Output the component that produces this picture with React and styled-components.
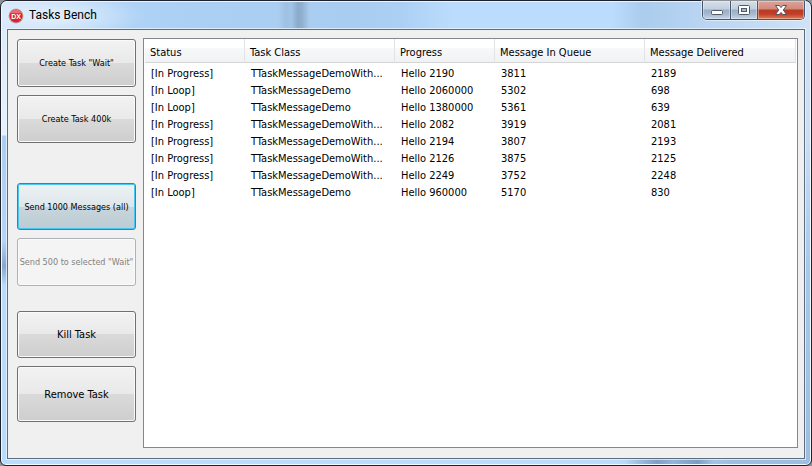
import React from "react";
import styled, { createGlobalStyle, css } from "styled-components";

const GlobalStyle = createGlobalStyle`
  * { box-sizing: border-box; }
  body {
    margin: 0;
    background: #8d9299;
    font-family: Tahoma, "DejaVu Sans Condensed", "Noto Sans", sans-serif;
    font-size: 11px;
    color: #000;
  }
`;

const Window = styled.main`
  min-height: 100vh;
  display: flex;
  flex-direction: column;
  padding: 0 6px 6px 6px;
  border: 1px solid #20222b;
  border-radius: 7px 7px 6px 6px;
  box-shadow: inset 0 0 0 1px #f2f8ff;
  background:
    linear-gradient(90deg, transparent 77%, #7f9fc5 81%, #94b4d8 83%, #7a9dc5 86%, transparent 88%) bottom / 100% 6px no-repeat,
    linear-gradient(180deg, #d9e9fa 0, #e6f1fc 134px, #abcdf0 135px, #b4d5f8 240px, #86a6cb 265px, #b9dcfd 285px) left / 7px 100% no-repeat,
    linear-gradient(180deg, #d3e4f7 0, #c9def5 140px, #a9c9ec 260px, #9dbde0 100%) right / 7px 100% no-repeat,
    linear-gradient(90deg, #bbdcfd 0, #bbdcfd 76%, #9fbfe2 90%);
`;

const TitleBar = styled.header`
  display: flex;
  align-items: flex-start;
  height: 28px;
  margin: 0 -5px;
  padding: 0 5px 0 6px;
  border-top: 1px solid #eaf4ff;
  border-radius: 6px 6px 0 0;
  background:
    radial-gradient(ellipse 90px 20px at 54px 14px, rgba(255,255,255,.5), transparent),
    linear-gradient(90deg, transparent 276px, rgba(70,90,115,.12) 284px, rgba(70,90,115,.08) 289px, rgba(70,90,115,.3) 296px, rgba(70,90,115,.26) 300px, transparent 308px),
    linear-gradient(90deg, #d5e6f9 0, #c5dff9 60px, #afd3f7 130px, #acd0f4 190px, #a9cdf0 350px, #acd0f4 400px, #bbdcfc 450px, #bbdcfc 610px, #abcced 640px, #b4d2f1 680px, #d0e2f6 100%);
`;

const AppIcon = styled.svg`
  width: 16px;
  height: 16px;
  margin-top: 6px;
`;

const Title = styled.h1`
  flex: 1;
  margin: 5px 0 0 5px;
  font: 12px/16px "Segoe UI", Roboto, sans-serif;
`;

const Controls = styled.div`
  display: flex;
  height: 19px;
  margin-top: -1px;
  border: 1px solid #4a5667;
  border-top: 0;
  border-radius: 0 0 5px 5px;
  overflow: hidden;
  box-shadow: 0 0 0 1px rgba(255,255,255,.5);
`;

const ControlButton = styled.button`
  display: grid;
  place-items: center;
  width: ${(p) => (p.$close ? 47 : 27)}px;
  padding: 0;
  border: 0;
  border-left: ${(p) => (p.$first ? 0 : 1)}px solid #4a5667;
  box-shadow: inset 0 0 0 1px rgba(255,255,255,.35);
  background: ${(p) =>
    p.$close
      ? "linear-gradient(#dfa397 0, #d08a7c 8px, #b93a25 9px, #c23d26 13px, #dc7d55 100%)"
      : "linear-gradient(#d4dfeb 0, #c0cedf 8px, #9aaec6 9px, #a5b8cf 13px, #c3d6ea 100%)"};
  svg { display: block; }
`;

const Client = styled.div`
  flex: 1;
  display: flex;
  align-items: stretch;
  gap: 7px;
  padding: 8px 6px 10px 9px;
  border: 1px solid #5e6d7d;
  box-shadow: 0 0 0 1px rgba(235,246,255,.75);
  background: #f0f0f0;
`;

const Sidebar = styled.nav`
  flex: none;
  width: 119px;
  padding-top: 1px;
`;

const ButtonGroup = styled.div`
  display: flex;
  flex-direction: column;
  gap: 8px;
  margin-bottom: ${(p) => p.$after}px;
`;

const active = css`
  border-color: #3c7fb1;
  box-shadow: inset 0 0 0 1px #48c8f0;
  background: linear-gradient(#eef2f4 0, #dde6ea 50%, #c8d5dc 50%, #bccbd3 100%);
`;

const TaskButton = styled.button`
  height: ${(p) => p.$height}px;
  padding: 0;
  border: 1px solid #707070;
  border-radius: 3px;
  box-shadow: inset 0 0 0 1px #fafafa;
  background: linear-gradient(#f2f2f2 0, #e9e9e9 50%, #dadada 50%, #cecece 100%);
  color: #000;
  font-family: inherit;
  font-size: ${(p) => (p.$small ? 9 : 11)}px;
  white-space: nowrap;
  ${(p) => p.$active && active}
  &:disabled {
    border-color: #adb2b5;
    background: #f4f4f4;
    color: #838383;
  }
`;

const ListView = styled.section`
  flex: 1;
  min-width: 0;
  padding: 0 1px;
  border: 1px solid #828790;
  background: #fff;
`;

const Table = styled.table`
  width: 100%;
  table-layout: fixed;
  border-collapse: separate;
  border-spacing: 0;
`;

const Col = styled.col`
  width: ${(p) => (p.$width ? `${p.$width}px` : "auto")};
`;

const HeadCell = styled.th`
  height: 24px;
  padding: 3px 5px 0;
  border-right: 1px solid #e2e3e5;
  border-bottom: 1px solid #d5d5d5;
  background: linear-gradient(#fff 0, #fff 40%, #f7f8fa 40%, #f1f2f4 100%);
  font-weight: 400;
  text-align: left;
  white-space: nowrap;
`;

const Body = styled.tbody`
  &::before {
    content: "";
    display: table-row;
    height: 2px;
  }
`;

const Cell = styled.td`
  height: 17px;
  padding: 0 6px;
  line-height: 17px;
  white-space: nowrap;
`;

const groups = [
  { after: 40, items: [
    { label: 'Create Task "Wait"', height: 48, small: true },
    { label: "Create Task 400k", height: 48, small: true },
  ] },
  { after: 25, items: [
    { label: "Send 1000 Messages (all)", height: 47, small: true, active: true },
    { label: 'Send 500 to selected "Wait"', height: 48, small: true, disabled: true },
  ] },
  { after: 0, items: [
    { label: "Kill Task", height: 47 },
    { label: "Remove Task", height: 56 },
  ] },
];

const columns = [
  ["Status", 100],
  ["Task Class", 150],
  ["Progress", 100],
  ["Message In Queue", 150],
  ["Message Delivered", null],
];

const rows = [
  ["[In Progress]", "TTaskMessageDemoWith...", "Hello 2190", "3811", "2189"],
  ["[In Loop]", "TTaskMessageDemo", "Hello 2060000", "5302", "698"],
  ["[In Loop]", "TTaskMessageDemo", "Hello 1380000", "5361", "639"],
  ["[In Progress]", "TTaskMessageDemoWith...", "Hello 2082", "3919", "2081"],
  ["[In Progress]", "TTaskMessageDemoWith...", "Hello 2194", "3807", "2193"],
  ["[In Progress]", "TTaskMessageDemoWith...", "Hello 2126", "3875", "2125"],
  ["[In Progress]", "TTaskMessageDemoWith...", "Hello 2249", "3752", "2248"],
  ["[In Loop]", "TTaskMessageDemo", "Hello 960000", "5170", "830"],
];

export default function App() {
  return (
    <>
      <GlobalStyle />
      <Window>
        <TitleBar>
          <AppIcon viewBox="0 0 16 16" aria-hidden="true">
            <circle cx="8" cy="8" r="7.5" fill="#b9a9b2" />
            <circle cx="8" cy="8" r="6.5" fill="#dc2430" />
            <path d="M2.2 5.2a6.5 6.5 0 0 1 11.6 0z" fill="#ee6a70" />
            <text x="8" y="10.5" textAnchor="middle" fontFamily="Liberation Sans, sans-serif" fontSize="7" fontWeight="700" fill="#fff">DX</text>
          </AppIcon>
          <Title>Tasks Bench</Title>
          <Controls>
            <ControlButton $first aria-label="Minimize">
              <svg width="14" height="14" viewBox="0 0 14 14">
                <rect x="1.5" y="7.5" width="11" height="4" rx="1" fill="#fff" stroke="#505a6b" />
              </svg>
            </ControlButton>
            <ControlButton aria-label="Maximize">
              <svg width="14" height="14" viewBox="0 0 14 14">
                <rect x="1.5" y="2.5" width="11" height="9" rx="1" fill="#fff" stroke="#505a6b" />
                <rect x="4.5" y="5.5" width="5" height="3" fill="#a5b8ce" stroke="#505a6b" />
              </svg>
            </ControlButton>
            <ControlButton $close aria-label="Close">
              <svg width="14" height="14" viewBox="0 0 14 14">
                <path d="M1.5 2.5h3.8L7 4.6l1.7-2.1h3.8L9.300 7l3.200 4.500H8.700L7 9.400l-1.700 2.100H1.500L4.700 7z" fill="#fff" stroke="#57505b" strokeLinejoin="round" />
              </svg>
            </ControlButton>
          </Controls>
        </TitleBar>
        <Client>
          <Sidebar aria-label="Task actions">
            {groups.map((g) => (
              <ButtonGroup key={g.items[0].label} $after={g.after}>
                {g.items.map((b) => (
                  <TaskButton key={b.label} type="button" $height={b.height} $small={b.small} $active={b.active} disabled={b.disabled}>
                    {b.label}
                  </TaskButton>
                ))}
              </ButtonGroup>
            ))}
          </Sidebar>
          <ListView>
            <Table>
              <colgroup>
                {columns.map(([name, width]) => <Col key={name} $width={width} />)}
              </colgroup>
              <thead>
                <tr>{columns.map(([name]) => <HeadCell key={name} scope="col">{name}</HeadCell>)}</tr>
              </thead>
              <Body>
                {rows.map((row, i) => (
                  <tr key={i}>{row.map((value, j) => <Cell key={j}>{value}</Cell>)}</tr>
                ))}
              </Body>
            </Table>
          </ListView>
        </Client>
      </Window>
    </>
  );
}
